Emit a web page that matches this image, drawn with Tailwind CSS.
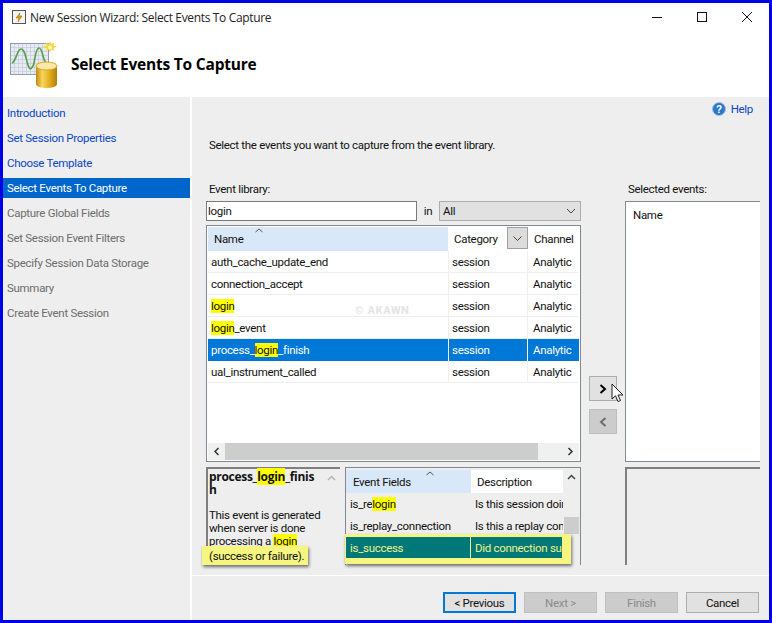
<!DOCTYPE html>
<html>
<head>
<meta charset="utf-8">
<script src="https://cdn.jsdelivr.net/npm/@tailwindcss/browser@4"></script>
</head>
<body class="overflow-hidden">
<div class="w-[772px] h-[623px] border-[3px] border-[#0000e6] bg-white flex flex-col font-['Roboto',sans-serif] text-[11.5px] leading-[16px] tracking-[-0.3px] text-[#111]">
  <!-- title bar -->
  <div class="h-[28px] shrink-0 flex items-center pl-[8px] relative font-['Open_Sans',sans-serif] text-[12px] tracking-[-0.35px]">
    <svg width="16" height="16" viewBox="0 0 16 16"><rect x="1.5" y="1.5" width="13" height="13" fill="#f4f4f0" stroke="#555"/><path d="M9 4 5 9h3l-1 4 4-6H8z" fill="#e0a010" stroke="#8a6000" stroke-width=".5"/></svg>
    <span class="ml-[3px] pt-px text-[#222]">New Session Wizard: Select Events To Capture</span>
    <div class="ml-auto flex items-center gap-[35px] pr-[17px]">
      <svg width="10" height="10" viewBox="0 0 10 10"><path d="M0 5.5h10" stroke="#111"/></svg>
      <svg width="10" height="10" viewBox="0 0 10 10"><rect x=".5" y=".5" width="9" height="9" fill="none" stroke="#111"/></svg>
      <svg width="10" height="10" viewBox="0 0 10 10"><path d="M0 0l10 10M10 0 0 10" stroke="#111"/></svg>
    </div>
  </div>
  <!-- banner -->
  <div class="h-[66px] shrink-0 flex items-center pl-[7px]">
    <svg width="48" height="50" viewBox="0 0 48 50">
      <defs>
        <linearGradient id="can" x1="0" x2="1" y1="0" y2="0"><stop offset="0" stop-color="#c08a10"/><stop offset=".3" stop-color="#f6d65c"/><stop offset=".65" stop-color="#e2ae1c"/><stop offset="1" stop-color="#b07c0c"/></linearGradient>
      </defs>
      <rect x="0.500" y="4.500" width="38" height="31" fill="#e8ecf2" stroke="#8f9bb0"/>
      <path d="M1 8.500h37M1 12.500h37M1 16.500h37M1 20.500h37M1 24.500h37M1 28.500h37M1 32.500h37M4.500 5v30M8.500 5v30M12.500 5v30M16.500 5v30M20.500 5v30M24.500 5v30M28.500 5v30M32.500 5v30" stroke="#c4ccd8" stroke-width=".7"/>
      <path d="M2 24c4-1 5-14 9-14s5 10 7 16 3 4 5 1 2-18 6-18 3 12 8 16" fill="none" stroke="#58a050" stroke-width="1.700"/>
      <path d="M40 2l1.500 3 3-1.500-1 3 3.500 1-3.500 1.500 1 3-3-1.500-1.500 3-1.500-3-3 1.500 1-3-3.500-1.500 3.500-1-1-3 3 1.500z" fill="#f6d840"/>
      <circle cx="40" cy="8.500" r="2" fill="#fff6c0"/>
      <path d="M26 27v18c0 5.500 21 5.500 21 0V27z" fill="url(#can)"/>
      <ellipse cx="36.500" cy="27" rx="10.500" ry="4" fill="#f8e8ac" stroke="#d8a820"/>
    </svg>
    <h1 class="ml-[13px] font-['Open_Sans',sans-serif] text-[15.500px] font-bold tracking-[-0.2px] text-black">Select Events To Capture</h1>
  </div>
  <!-- body -->
  <div class="flex-1 flex min-h-0">
    <!-- steps -->
    <nav class="w-[187px] shrink-0 bg-[#eeeeee] pt-[3px] mr-[2px]">
      <div class="h-[25px] pl-[4px] flex items-center text-[#0a46c8]">Introduction</div>
      <div class="h-[25px] pl-[4px] flex items-center text-[#0a46c8]">Set Session Properties</div>
      <div class="h-[25px] pl-[4px] flex items-center text-[#0a46c8]">Choose Template</div>
      <div class="h-[20px] my-[2.500px] pl-[4px] flex items-center bg-[#0066cc] text-white">Select Events To Capture</div>
      <div class="h-[25px] pl-[4px] flex items-center text-[#6d6d6d]">Capture Global Fields</div>
      <div class="h-[25px] pl-[4px] flex items-center text-[#6d6d6d]">Set Session Event Filters</div>
      <div class="h-[25px] pl-[4px] flex items-center text-[#6d6d6d]">Specify Session Data Storage</div>
      <div class="h-[25px] pl-[4px] flex items-center text-[#6d6d6d]">Summary</div>
      <div class="h-[25px] pl-[4px] flex items-center text-[#6d6d6d]">Create Event Session</div>
    </nav>
    <div class="flex-1 flex flex-col min-w-0">
      <main class="h-[478px] bg-[#eeeeee] pl-[14px] relative">
        <!-- help -->
        <div class="h-[24px] flex items-center justify-end pr-[16px] text-[#0a46c8]">
          <svg width="14" height="14" viewBox="0 0 14 14" class="mr-[5px]"><circle cx="7" cy="7" r="6.500" fill="#2f78c8" stroke="#9cc0e6"/><text x="7" y="11" text-anchor="middle" font-size="10" font-weight="700" fill="#fff" font-family="Liberation Sans">?</text></svg>
          <span>Help</span>
        </div>
        <p class="ml-[3px] mt-[16px] h-[16px]">Select the events you want to capture from the event library.</p>
        <div class="flex mt-[27px] gap-[8px]">
          <!-- left column -->
          <div class="w-[375px] shrink-0">
            <div class="ml-[3px] h-[16px] pt-px">Event library:</div>
            <div class="flex items-center mt-[5px] h-[20px]">
              <div class="w-[211px] h-[20px] bg-white border border-[#7a7a7a] pl-[1px] leading-[18px] text-[#111]">login</div>
              <span class="w-[22px] text-center">in</span>
              <div class="flex-1 h-[20px] bg-[#e1e1e1] border border-[#adadad] pl-[3px] flex items-center justify-between pr-[4px]">
                <span>All</span>
                <svg width="10" height="6" viewBox="0 0 10 6"><path d="M1 1l4 4 4-4" fill="none" stroke="#444"/></svg>
              </div>
            </div>
            <!-- event list -->
            <div class="mt-[4px] h-[237px] border border-[#828790] bg-white p-[1px] flex flex-col">
              <div class="flex h-[24px] shrink-0 relative">
                <div class="w-[240px] bg-[#d9e8f8] pl-[6px] flex items-center">Name</div>
                <svg class="absolute left-[47px] top-[1px]" width="8" height="5" viewBox="0 0 8 5"><path d="M.5 4 4 1l3.500 3" fill="none" stroke="#555"/></svg>
                <div class="w-[80px] flex items-center pl-[6px] relative">Category
                  <div class="absolute right-[0px] top-0 w-[21px] h-[22px] bg-[#dcdcdc] border border-[#a0a0a0] flex items-center justify-center"><svg width="9" height="5" viewBox="0 0 9 5"><path d="M.5.5l4 4 4-4" fill="none" stroke="#444"/></svg></div>
                </div>
                <div class="flex-1 pl-[6px] flex items-center">Channel</div>
              </div>
              <div class="flex h-[22px] border-b border-[#efefef] items-center"><div class="w-[240px] pl-[3px]">auth_cache_update_end</div><div class="w-[80px] pl-[3px] self-stretch flex items-center border-x border-[#efefef]">session</div><div class="pl-[5px]">Analytic</div></div>
              <div class="flex h-[22px] border-b border-[#efefef] items-center"><div class="w-[240px] pl-[3px]">connection_accept</div><div class="w-[80px] pl-[3px] self-stretch flex items-center border-x border-[#efefef]">session</div><div class="pl-[5px]">Analytic</div></div>
              <div class="flex h-[22px] border-b border-[#efefef] items-center relative"><div class="w-[240px] pl-[3px]"><span class="bg-[#ffff00]">login</span></div><div class="w-[80px] pl-[3px] self-stretch flex items-center border-x border-[#efefef]">session</div><div class="pl-[5px]">Analytic</div>
                <span class="absolute left-[147px] top-[8px] text-[11px] font-bold tracking-[0.6px] text-[#e4e4e4]">© AKAWN</span></div>
              <div class="flex h-[22px] border-b border-[#efefef] items-center"><div class="w-[240px] pl-[3px]"><span class="bg-[#ffff00]">login</span>_event</div><div class="w-[80px] pl-[3px] self-stretch flex items-center border-x border-[#efefef]">session</div><div class="pl-[5px]">Analytic</div></div>
              <div class="flex h-[22px] items-center bg-[#0078d7] text-white"><div class="w-[240px] pl-[3px]">process_<span class="bg-[#ffff00] text-[#111]">login</span>_finish</div><div class="w-[80px] pl-[3px] self-stretch flex items-center border-x border-white">session</div><div class="pl-[5px]">Analytic</div></div>
              <div class="flex h-[22px] border-b border-[#efefef] items-center"><div class="w-[240px] pl-[3px]">ual_instrument_called</div><div class="w-[80px] pl-[3px] self-stretch flex items-center border-x border-[#efefef]">session</div><div class="pl-[5px]">Analytic</div></div>
              <div class="flex-1"></div>
              <div class="h-[17px] shrink-0 bg-[#f0f0f0] flex items-center">
                <svg class="mx-[5px]" width="7" height="9" viewBox="0 0 7 9"><path d="M5.500 1 2 4.500 5.500 8" fill="none" stroke="#333" stroke-width="1.500"/></svg>
                <div class="w-[313px] h-full bg-[#cdcdcd]"></div>
                <svg class="ml-auto mr-[5px]" width="7" height="9" viewBox="0 0 7 9"><path d="M1.500 1 5 4.500 1.500 8" fill="none" stroke="#333" stroke-width="1.500"/></svg>
              </div>
            </div>
            <!-- lower panes -->
            <div class="flex mt-[5px] h-[98px] gap-[5px]">
              <div class="w-[134px] border-l-2 border-t-2 border-[#7f7f7f] flex relative">
                <div class="flex-1 pl-[1px] text-[#111] leading-[13px] whitespace-nowrap">
                  <div class="font-['Open_Sans',sans-serif] text-[12px] font-bold tracking-[-0.3px] pt-[1px]">process_<span class="bg-[#ffff00]">login</span>_finis<br>h</div>
                  <div class="mt-[13px]">This event is generated<br>when server is done<br>processing a <span class="bg-[#ffff00]">login</span></div>
                </div>
                <div class="w-[17px] shrink-0 flex justify-center pt-[6px]"><svg width="9" height="6" viewBox="0 0 9 6"><path d="M1 5l3.500-3.500L8 5" fill="none" stroke="#b5b5b5" stroke-width="1.500"/></svg></div>
                <!-- callout -->
                <div class="absolute left-[-6px] top-[77px] w-[106px] h-[19px] bg-[#f5f580] shadow-[1px_2px_3px_rgba(0,0,0,0.55)] pl-[7px] flex items-center whitespace-nowrap">(success or failure).</div>
              </div>
              <div class="flex-1 border-t border-x border-[#828790] flex relative min-w-0">
                <div class="w-[217px] shrink-0 pt-[2px]">
                  <div class="flex h-[23px] relative">
                    <div class="w-[125px] bg-[#d9e8f8] pl-[7px] flex items-center">Event Fields</div>
                    <svg class="absolute left-[80px] top-[1px]" width="8" height="5" viewBox="0 0 8 5"><path d="M.5 4 4 1l3.500 3" fill="none" stroke="#555"/></svg>
                    <div class="flex-1 bg-white pl-[6px] flex items-center">Description</div>
                  </div>
                  <div class="flex h-[22px] items-center whitespace-nowrap overflow-hidden"><div class="w-[125px] shrink-0 pl-[4px]">is_re<span class="bg-[#ffff00]">login</span></div><div class="pl-[4px]">Is this session doing</div></div>
                  <div class="flex h-[22px] items-center whitespace-nowrap overflow-hidden"><div class="w-[125px] shrink-0 pl-[4px]">is_replay_connection</div><div class="pl-[4px]">Is this a replay connection</div></div>
                </div>
                <div class="flex-1 flex flex-col items-center pt-[6px]">
                  <svg width="9" height="6" viewBox="0 0 9 6"><path d="M1 5l3.500-3.500L8 5" fill="none" stroke="#444" stroke-width="1.500"/></svg>
                  <div class="w-[15px] h-[17px] bg-[#cdcdcd] mt-[37px]"></div>
                </div>
                <!-- callout -->
                <div class="absolute left-[-1px] top-[66px] w-[226px] h-[30px] bg-[#f5f580] shadow-[1px_2px_3px_rgba(0,0,0,0.55)] pt-[3px] pl-[1px]">
                  <div class="flex w-[216px] h-[21px] items-center bg-[#007878] text-[#f2f28c] whitespace-nowrap overflow-hidden"><div class="w-[125px] shrink-0 pl-[4px] h-full flex items-center border-r border-[#f7f78c]">is_success</div><div class="pl-[4px]">Did connection succeed</div></div>
                </div>
              </div>
            </div>
          </div>
          <!-- move buttons -->
          <div class="w-[28px] shrink-0 pt-[196px]">
            <div class="h-[25px] bg-[#e1e1e1] border border-[#adadad] flex items-center justify-center"><svg width="8" height="10" viewBox="0 0 8 10"><path d="M1.500 1 6 5l-4.500 4" fill="none" stroke="#000" stroke-width="2"/></svg></div>
            <div class="h-[25px] mt-[8px] bg-[#cccccc] border border-[#bdbdbd] flex items-center justify-center"><svg width="8" height="10" viewBox="0 0 8 10"><path d="M6.500 1 2 5l4.500 4" fill="none" stroke="#6d6d6d" stroke-width="2"/></svg></div>
          </div>
          <!-- right column -->
          <div class="w-[135px] shrink-0">
            <div class="ml-[3px] h-[16px] pt-px">Selected events:</div>
            <div class="mt-[5px] h-[261px] bg-white border-y border-l border-[#828790] pl-[7px] pt-[5px]">Name</div>
            <div class="mt-[5px] h-[98px] border-t-2 border-l-2 border-[#7f7f7f]"></div>
          </div>
        </div>
        <!-- mouse cursor -->
        <svg class="absolute left-[419px] top-[286px]" width="14" height="20" viewBox="0 0 14 20"><path d="M1 1v15l3.500-3.200L7 18.500l2.500-1-2.500-5.500h5z" fill="#fff" stroke="#222"/></svg>
      </main>
      <div class="h-px bg-white shrink-0"></div>
      <!-- footer -->
      <footer class="flex-1 bg-[#eeeeee] flex justify-end gap-[8px] pr-[10px] pt-[16px]">
        <div class="w-[73px] h-[21px] bg-[#e1e1e1] border-2 border-[#0078d7] flex items-center justify-center">&lt; Previous</div>
        <div class="w-[73px] h-[21px] bg-[#cccccc] border border-[#bfbfbf] flex items-center justify-center text-[#8a8a8a]">Next &gt;</div>
        <div class="w-[73px] h-[21px] bg-[#cccccc] border border-[#bfbfbf] flex items-center justify-center text-[#8a8a8a]">Finish</div>
        <div class="w-[73px] h-[21px] bg-[#e1e1e1] border border-[#adadad] flex items-center justify-center">Cancel</div>
      </footer>
    </div>
  </div>
</div>
</body>
</html>
